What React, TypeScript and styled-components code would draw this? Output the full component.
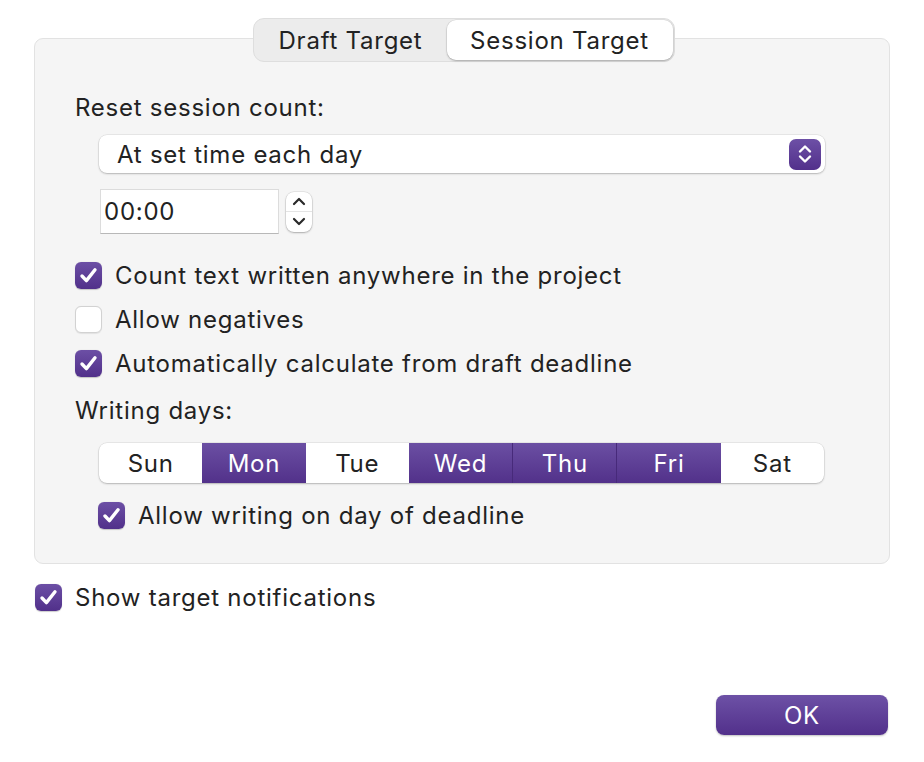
import { createGlobalStyle } from "styled-components";
import styled from "styled-components";

const Global = createGlobalStyle`
    body{
        margin: 0;
        background: #ffffff;
        font-family: Inter, "Noto Sans", "Liberation Sans", sans-serif;
        letter-spacing: 0.75px;
        color: #222222;
    }
`;

const Page = styled.div`
    width: 924px;
    height: 762px;
    box-sizing: border-box;
    padding: 18px 35px 0 34px;
    display: flex;
    flex-direction: column;
`;

const TabBar = styled.div`
    align-self: center;
    display: flex;
    height: 44px;
    box-sizing: border-box;
    padding: 1px;
    margin-left: 4px;
    background: #ececec;
    border: 1px solid #dedede;
    border-radius: 11px;
    position: relative;
    z-index: 1;
    margin-bottom: -24px;
`;

const Tab = styled.div<{ $active?: boolean }>`
    display: flex;
    align-items: center;
    justify-content: center;
    font-size: 24px;
    border-radius: 9px;
    width: ${(p) => (p.$active ? "226px" : "192px")};
    background: ${(p) => (p.$active ? "#ffffff" : "transparent")};
    box-shadow: ${(p) => (p.$active ? "0 1px 2px rgba(0,0,0,0.25), 0 0 0 0.5px rgba(0,0,0,0.08)" : "none")};
`;

const Group = styled.div`
    box-sizing: border-box;
    width: 856px;
    background: #f5f5f5;
    border: 1px solid #e2e2e2;
    border-radius: 9px;
    padding: 54px 0 26px 40px;
    display: flex;
    flex-direction: column;
`;

const Label = styled.div<{ $top?: number }>`
    font-size: 24px;
    line-height: 30px;
    margin-top: ${(p) => p.$top ?? 0}px;
`;

const Indent = styled.div<{ $top: number }>`
    margin-left: 24px;
    margin-top: ${(p) => p.$top}px;
    display: flex;
    align-items: center;
`;

const Popup = styled.div`
    width: 726px;
    height: 38px;
    box-sizing: border-box;
    background: #fff;
    border-radius: 8px;
    box-shadow: 0 1px 2px rgba(0,0,0,0.22), 0 0 0 0.5px rgba(0,0,0,0.1);
    display: flex;
    align-items: center;
    justify-content: space-between;
    padding: 0 4px 0 18px;
    font-size: 24px;
`;

const PopupArrows = styled.div`
    width: 32px;
    height: 31px;
    border-radius: 7px;
    background: linear-gradient(#6d50a6, #52308b);
    display: flex;
    align-items: center;
    justify-content: center;
`;

const TimeField = styled.div`
    width: 179px;
    height: 45px;
    box-sizing: border-box;
    background: #fff;
    border: 1px solid #dcdcdc;
    border-bottom-color: #b8b8b8;
    font-size: 24px;
    display: flex;
    align-items: center;
    padding-left: 3px;
    margin-left: 1px;
`;

const Stepper = styled.div`
    margin-left: 7px;
    width: 26px;
    height: 40px;
    box-sizing: border-box;
    background: #fff;
    border-radius: 8px;
    box-shadow: 0 1px 2px rgba(0,0,0,0.25), 0 0 0 0.5px rgba(0,0,0,0.12);
    display: flex;
    flex-direction: column;
    align-items: center;
    justify-content: space-evenly;
`;

const StepLine = styled.div`
    width: 100%;
    height: 1px;
    background: #e4e4e4;
`;

const CheckRow = styled.div<{ $top?: number; $left?: number }>`
    display: flex;
    align-items: center;
    height: 44px;
    margin-top: ${(p) => p.$top ?? 0}px;
    margin-left: ${(p) => p.$left ?? 0}px;
    font-size: 24px;
    gap: 13px;
`;

const Box = styled.div<{ $on: boolean }>`
    width: 27px;
    height: 27px;
    box-sizing: border-box;
    border-radius: 6px;
    flex: none;
    display: flex;
    align-items: center;
    justify-content: center;
    background: ${(p) => (p.$on ? "linear-gradient(#6c4fa5, #51308a)" : "#ffffff")};
    border: ${(p) => (p.$on ? "none" : "1px solid #d2d2d2")};
    box-shadow: ${(p) => (p.$on ? "0 0.5px 1px rgba(0,0,0,0.2)" : "0 0.5px 1px rgba(0,0,0,0.08)")};
`;

const Days = styled.div`
    margin-left: 24px;
    margin-top: 17px;
    width: 725px;
    height: 40px;
    display: flex;
    border-radius: 8px;
    overflow: hidden;
    background: #fff;
    box-shadow: 0 1px 2px rgba(0,0,0,0.22), 0 0 0 0.5px rgba(0,0,0,0.1);
`;

const Day = styled.div<{ $on: boolean; $sep: boolean }>`
    flex: 1;
    display: flex;
    align-items: center;
    justify-content: center;
    font-size: 24px;
    color: ${(p) => (p.$on ? "#ffffff" : "#222")};
    background: ${(p) => (p.$on ? "linear-gradient(#6b4fa3, #52318a)" : "transparent")};
    border-left: ${(p) => (p.$sep ? "1px solid #472a7a" : "none")};
`;

const Footer = styled.div`
    display: flex;
    justify-content: flex-end;
    margin-top: 76px;
    margin-right: 1px;
`;

const OkButton = styled.button`
    width: 172px;
    height: 40px;
    border: none;
    border-radius: 8px;
    background: linear-gradient(#6d51a6, #52308b);
    color: #fff;
    font-family: inherit;
    letter-spacing: inherit;
    font-size: 24px;
    box-shadow: 0 1px 2px rgba(0,0,0,0.25);
`;

function Check() {
    return (
        <svg width="21" height="21" viewBox="0 0 21 21">
            <path d="M4 11 L8.4 15.6 L17 4.8" fill="none" stroke="#fff" strokeWidth="3.4" strokeLinecap="round" strokeLinejoin="round" />
        </svg>
    );
}

function Checkbox({ on, label, top, left }: { on: boolean; label: string; top?: number; left?: number }) {
    return (
        <CheckRow $top={top} $left={left}>
            <Box $on={on}>{on && <Check />}</Box>
            <span>{label}</span>
        </CheckRow>
    );
}

function Chevron({ up }: { up: boolean }) {
    return (
        <svg width="14" height="9" viewBox="0 0 14 9">
            <path d={up ? "M2 7 L7 2 L12 7" : "M2 2 L7 7 L12 2"} fill="none" stroke="#2a2a2a" strokeWidth="2.2" strokeLinecap="round" strokeLinejoin="round" />
        </svg>
    );
}

const days = [
    { name: "Sun", on: false },
    { name: "Mon", on: true },
    { name: "Tue", on: false },
    { name: "Wed", on: true },
    { name: "Thu", on: true },
    { name: "Fri", on: true },
    { name: "Sat", on: false },
];

export default function App() {
    return (
        <Page>
            <Global />
            <TabBar>
                <Tab>Draft Target</Tab>
                <Tab $active>Session Target</Tab>
            </TabBar>
            <Group>
                <Label>Reset session count:</Label>
                <Indent $top={12}>
                    <Popup>
                        <span>At set time each day</span>
                        <PopupArrows>
                            <svg width="16" height="22" viewBox="0 0 16 22">
                                <path d="M3 8.5 L8 3.5 L13 8.5 M3 13.5 L8 18.5 L13 13.5" fill="none" stroke="#fff" strokeWidth="2.4" strokeLinecap="round" strokeLinejoin="round" />
                            </svg>
                        </PopupArrows>
                    </Popup>
                </Indent>
                <Indent $top={16}>
                    <TimeField>00:00</TimeField>
                    <Stepper>
                        <Chevron up />
                        <StepLine />
                        <Chevron up={false} />
                    </Stepper>
                </Indent>
                <Checkbox on label="Count text written anywhere in the project" top={19} />
                <Checkbox on={false} label="Allow negatives" />
                <Checkbox on label="Automatically calculate from draft deadline" />
                <Label $top={11}>Writing days:</Label>
                <Days>
                    {days.map((d, i) => (
                        <Day key={d.name} $on={d.on} $sep={i > 0 && d.on && days[i - 1].on}>
                            {d.name}
                        </Day>
                    ))}
                </Days>
                <Checkbox on label="Allow writing on day of deadline" top={10} left={23} />
            </Group>
            <Checkbox on label="Show target notifications" top={11} left={1} />
            <Footer>
                <OkButton>OK</OkButton>
            </Footer>
        </Page>
    );
}
